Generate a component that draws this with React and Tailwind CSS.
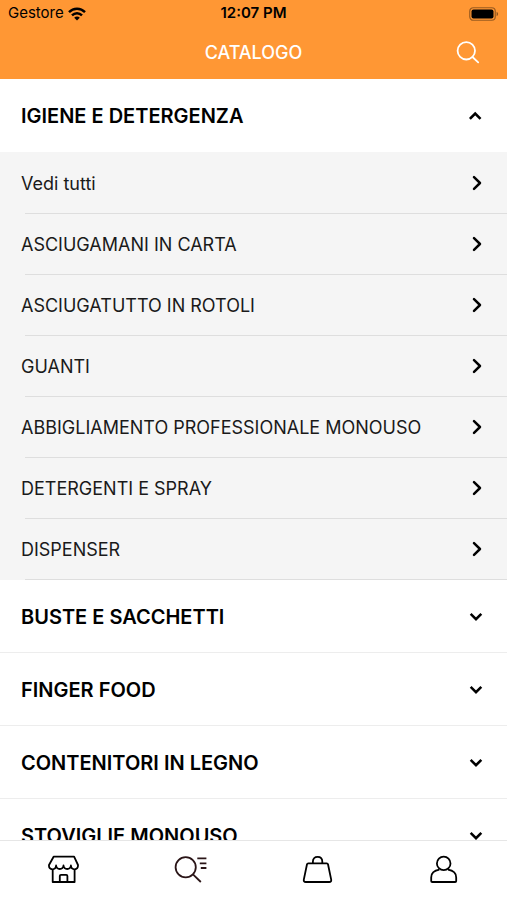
import { useState } from 'react';

const categories = [
  {
    name: 'IGIENE E DETERGENZA',
    items: [
      'Vedi tutti',
      'ASCIUGAMANI IN CARTA',
      'ASCIUGATUTTO IN ROTOLI',
      'GUANTI',
      'ABBIGLIAMENTO PROFESSIONALE MONOUSO',
      'DETERGENTI E SPRAY',
      'DISPENSER',
    ],
  },
  { name: 'BUSTE E SACCHETTI', items: ['Vedi tutti'] },
  { name: 'FINGER FOOD', items: ['Vedi tutti'] },
  { name: 'CONTENITORI IN LEGNO', items: ['Vedi tutti'] },
  { name: 'STOVIGLIE MONOUSO', items: ['Vedi tutti'] },
];

const tabs = [
  { label: 'Negozio', Icon: ShopIcon },
  { label: 'Catalogo', Icon: CatalogIcon },
  { label: 'Carrello', Icon: BagIcon },
  { label: 'Profilo', Icon: UserIcon },
];

function WifiIcon() {
  return (
    <svg width="18" height="14" viewBox="0 0 18 14" fill="none" stroke="currentColor" strokeWidth="2.4">
      <path d="M1 5.2C5.4 0.6 12.6 0.6 17 5.2" />
      <path d="M4 8.4C6.8 5.5 11.2 5.5 14 8.4" />
      <path d="M9 13.6L6.2 10.7C7.8 9.2 10.2 9.2 11.8 10.7Z" fill="currentColor" stroke="none" />
    </svg>
  );
}

function BatteryIcon() {
  return (
    <svg width="30" height="14" viewBox="0 0 30 14" fill="none">
      <rect x="0.75" y="0.75" width="25.5" height="12.5" rx="3.5" stroke="black" strokeOpacity="0.4" strokeWidth="1.2" />
      <rect x="2.5" y="2.5" width="22" height="9" rx="2" fill="black" />
      <path d="M27.6 4.8C29.6 5.6 29.6 8.4 27.6 9.2Z" fill="black" fillOpacity="0.45" />
    </svg>
  );
}

function SearchIcon() {
  return (
    <svg width="24" height="24" viewBox="0 0 24 24" fill="none" stroke="currentColor" strokeWidth="1.8" strokeLinecap="round">
      <circle cx="10.3" cy="9.8" r="8.7" />
      <path d="M16.5 16L22.2 21.4" />
    </svg>
  );
}

function ChevronRight() {
  return (
    <svg width="10" height="16" viewBox="0 0 10 16" fill="none" stroke="currentColor" strokeWidth="2.5" strokeLinecap="round" strokeLinejoin="round">
      <path d="M2 2.2L8 8L2 13.8" />
    </svg>
  );
}

function ChevronToggle({ open }) {
  return (
    <svg width="14" height="10" viewBox="0 0 14 10" fill="none" stroke="currentColor" strokeWidth="2.6" strokeLinecap="square">
      <path d={open ? 'M1.8 7L6.2 2.6L10.6 7' : 'M2.6 2.8L7 7.2L11.4 2.8'} />
    </svg>
  );
}

function ShopIcon() {
  return (
    <svg width="32" height="28" viewBox="0 0 32 28" fill="none" stroke="currentColor" strokeWidth="1.8" strokeLinejoin="round">
      <path d="M6.6 1.7H27.1L31 10C31.2 12.7 29.8 14.3 27.7 14.3C25.6 14.3 24.1 13 23.9 10.5C23.6 12.8 22.3 14 20.2 14C18 14 16.8 12.8 16.5 10.5C16.2 12.8 14.9 14 12.8 14C10.7 14 9.4 12.8 9.1 10.5C8.9 13 7.5 14.3 5.4 14.3C3.2 14.3 1.7 12.7 2 10Z" />
      <path d="M5.7 14.3V27H27.6V14.3" />
      <path d="M12.8 27V21C12.8 20.2 13.2 19.8 14 19.8H19.2C20 19.8 20.4 20.2 20.4 21V27" />
    </svg>
  );
}

function CatalogIcon() {
  return (
    <svg width="34" height="28" viewBox="-1 0 34 28" fill="none" stroke="#2a1517" strokeWidth="1.8">
      <circle cx="11.7" cy="12.3" r="10.1" />
      <path d="M19 19.4L26.8 27" />
      <path d="M23.3 3.3H32.4M25.8 8.3H32.4M26.8 13H32.4" />
    </svg>
  );
}

function BagIcon() {
  return (
    <svg width="32" height="28" viewBox="0 0 32 28" fill="none" stroke="currentColor" strokeWidth="1.8" strokeLinejoin="round">
      <path d="M7.3 8.3H25.7C26.4 8.3 26.8 8.6 27 9.3L30.2 24.6C30.5 26.1 29.7 27 28.3 27H4.7C3.3 27 2.5 26.1 2.8 24.6L6 9.3C6.2 8.6 6.6 8.3 7.3 8.3Z" />
      <path d="M11.9 8.3V6.6C11.9 3.6 13.8 1.9 16.6 1.9C19.4 1.9 21.3 3.6 21.3 6.6V8.3" />
    </svg>
  );
}

function UserIcon() {
  return (
    <svg width="32" height="28" viewBox="0 0 32 28" fill="none" stroke="currentColor" strokeWidth="1.8" strokeLinejoin="round">
      <circle cx="15.7" cy="8.4" r="6.8" />
      <path d="M11.4 14.6C6.4 15.4 3.2 18.4 3.2 22.4V25.9C3.2 26.7 3.6 27 4.3 27H27.1C27.8 27 28.2 26.7 28.2 25.9V22.4C28.2 18.4 25 15.4 20 14.6" />
    </svg>
  );
}

function Category({ category, open, onToggle }) {
  return (
    <section>
      <h2>
        <button
          onClick={onToggle}
          aria-expanded={open}
          className={`flex h-[73px] w-full items-center justify-between border-b pt-0.5 pr-6 pl-[21px] text-left text-xl font-semibold ${
            open ? 'border-transparent' : 'border-[#ededed]'
          }`}
        >
          {category.name}
          <ChevronToggle open={open} />
        </button>
      </h2>
      {open && (
        <ul className="bg-[#f5f5f5] pt-px">
          {category.items.map((item) => (
            <li key={item}>
              <a href="#" className="flex h-[60px] items-center justify-between pr-[25px] pl-[21px] text-lg text-[#1a1a1a]">
                <span className="pt-0.5">{item}</span>
                <span className="text-black">
                  <ChevronRight />
                </span>
              </a>
              <div className="ml-[25px] h-px bg-[#dedede]" />
            </li>
          ))}
        </ul>
      )}
    </section>
  );
}

export default function App() {
  const [openCategory, setOpenCategory] = useState('IGIENE E DETERGENZA');

  return (
    <div className="flex h-screen flex-col bg-white font-['Inter',sans-serif] text-black">
      <header className="shrink-0 bg-[#ff9734]">
        {/* Status bar */}
        <div className="grid h-[27px] grid-cols-3 items-center px-2 text-[15px]">
          <div className="flex items-center gap-1">
            Gestore
            <WifiIcon />
          </div>
          <div className="text-center font-semibold">12:07 PM</div>
          <div className="flex justify-end">
            <BatteryIcon />
          </div>
        </div>

        {/* Title bar */}
        <div className="grid h-[52px] grid-cols-[1fr_auto_1fr] items-center px-[27px] text-white">
          <h1 className="col-start-2 text-lg font-medium">CATALOGO</h1>
          <button aria-label="Cerca" className="justify-self-end">
            <SearchIcon />
          </button>
        </div>
      </header>

      <main className="min-h-0 flex-1 overflow-y-auto [scrollbar-width:none]">
        {categories.map((category) => (
          <Category
            key={category.name}
            category={category}
            open={openCategory === category.name}
            onToggle={() => setOpenCategory(openCategory === category.name ? null : category.name)}
          />
        ))}
      </main>

      <nav className="grid h-[60px] shrink-0 grid-cols-4 border-t border-[#e6e6e6] bg-white">
        {tabs.map(({ label, Icon }) => (
          <a key={label} href="#" aria-label={label} className="flex items-center justify-center pb-1">
            <Icon />
          </a>
        ))}
      </nav>
    </div>
  );
}
